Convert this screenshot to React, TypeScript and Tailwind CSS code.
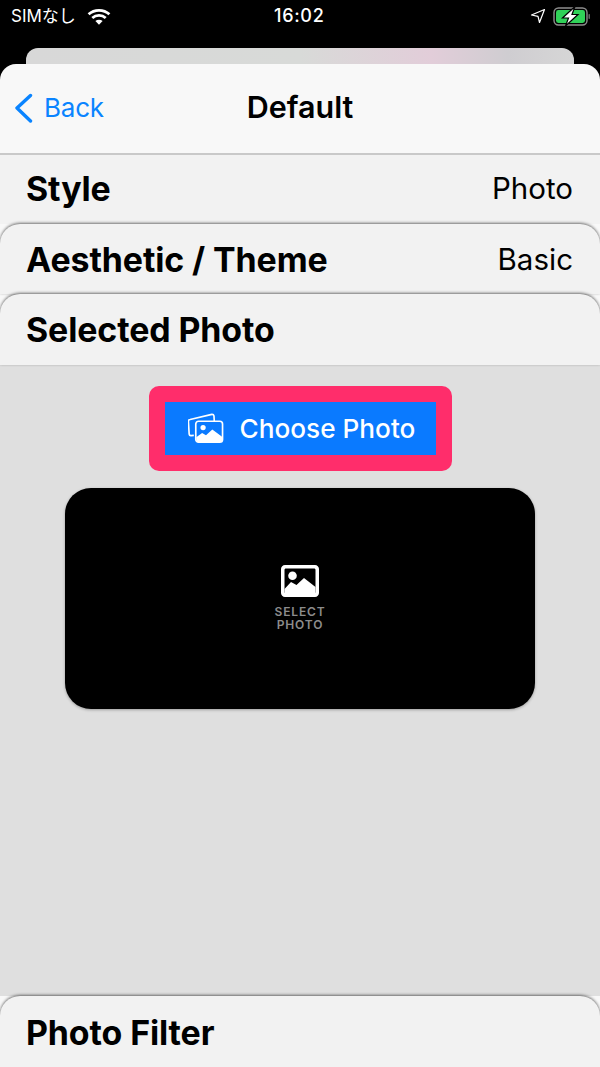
export default function App() {
  const font = "font-['Inter','Noto_Sans_CJK_JP',sans-serif]";

  return (
    <div className={`flex h-[1067px] w-[600px] flex-col overflow-hidden bg-black ${font}`}>
      {/* status bar */}
      <div className="relative flex h-[48px] shrink-0 items-start justify-between pl-[11px] pr-[9px] pt-[6px] text-white">
        <div className="flex h-[20px] items-center">
          <span className="text-[17px] leading-[20px]">SIMなし</span>
          <svg className="ml-[11px] h-[17px] w-[24px]" viewBox="0 0 24 17" fill="none" stroke="white" strokeWidth="2.8">
            <path d="M1.6 6.3 C7.4 1 16.6 1 22.4 6.3" />
            <path d="M5.3 10 C9 6.6 15 6.6 18.7 10" />
            <path d="M12 16.8 L8.4 12.9 C10.4 11.2 13.6 11.2 15.6 12.9 Z" fill="white" stroke="none" />
          </svg>
        </div>
        <span className="absolute left-[274px] top-[6px] text-[18px] leading-[20px] font-medium tracking-[0.7px]">16:02</span>
        <div className="flex h-[20px] items-center">
          <svg className="mr-[7px] h-[16px] w-[16px]" viewBox="0 0 16 16" fill="none" stroke="white" strokeWidth="1.2" strokeLinejoin="round">
            <path d="M14.5 1.5 L1.5 7 L8 8.3 L9.5 14.5 Z" />
          </svg>
          <svg className="h-[20px] w-[38px]" viewBox="0 0 38 20" fill="none">
            <rect x="1" y="2" width="33" height="17" rx="4.5" stroke="#8e8e8e" strokeWidth="1.4" />
            <rect x="3" y="4" width="29" height="13" rx="2.4" fill="#30d158" />
            <rect x="35.5" y="8" width="1.4" height="5" rx="0.7" fill="#6e6e6e" />
            <path d="M22 0.5 L9.5 12 L15.5 12 L12.5 20 L25 8.5 L19 8.5 Z" fill="white" stroke="black" strokeWidth="1.2" />
          </svg>
        </div>
      </div>

      {/* sheet behind */}
      <div className="mx-[26px] h-[16px] shrink-0 rounded-t-[12px] bg-[linear-gradient(90deg,#d8d8d8_0%,#d8dad8_50%,#e2cdd9_74%,#cfcdd1_88%,#d6d6d6_100%)]" />

      {/* main sheet */}
      <div className="flex flex-1 flex-col overflow-hidden rounded-t-[16px] bg-[#f8f8f8]">
        <div className="relative flex h-[91px] shrink-0 items-center justify-center border-b-2 border-[#c9c9c9]">
          <div className="absolute left-[14px] top-[29px] flex items-center text-[#0a84ff]">
            <svg className="h-[30px] w-[19px]" viewBox="0 0 19 30" fill="none" stroke="#0a84ff" strokeWidth="3.4" strokeLinecap="round" strokeLinejoin="round">
              <path d="M16.5 2.5 L3 15 L16.5 28" />
            </svg>
            <span className="ml-[11px] text-[26px] leading-[30px] tracking-[-0.2px]">Back</span>
          </div>
          <h1 className="-mt-[4px] text-[30.5px] leading-[34px] font-semibold text-black">Default</h1>
        </div>

        <Row title="Style" value="Photo" height="h-[69px]" offset="-mt-[1px]" first />
        <Row title="Aesthetic / Theme" value="Basic" height="h-[70px]" offset="mt-[1px]" />
        <Row title="Selected Photo" height="h-[71px]" offset="mt-[1px]" />

        <div className="flex flex-1 flex-col items-center bg-[#dfdfdf] pt-[21px]">
          <div className="rounded-[10px] bg-[#ff2d6b] p-[16px]">
            <button className="flex h-[53px] w-[271px] items-center bg-[#0a7aff] pl-[23px] text-white">
              <svg className="h-[31px] w-[36px]" viewBox="0 0 37 31" fill="none" stroke="white" strokeWidth="1.7" strokeLinejoin="round">
                <path d="M6 22.5 L3.2 22.8 C2 22.9 1.3 22.2 1.2 21.2 L0.4 8.4 C0.3 7.2 1 6.4 2.2 6.3 L24.5 1 C25.8 0.9 26.5 1.6 26.7 2.6 L27 8" />
                <rect x="8" y="8" width="27.5" height="21.5" rx="2.8" />
                <circle cx="15.5" cy="14.5" r="2.7" fill="white" stroke="none" />
                <path d="M8.5 27 L8.5 24.5 L14.5 20 L18.5 22.5 L25 16.5 L35 24 L35 27 C35 28.5 34 29.5 33 29.5 L11 29.5 C9.5 29.5 8.5 28.5 8.5 27 Z" fill="white" stroke="none" />
              </svg>
              <span className="ml-[16px] text-[26.2px] leading-[30px] font-medium">Choose Photo</span>
            </button>
          </div>

          <div className="mt-[17px] flex h-[221px] w-[470px] flex-col items-center rounded-[26px] bg-black pt-[77px] shadow-[0_1px_3px_rgba(0,0,0,0.3)]">
            <svg className="h-[32px] w-[38px]" viewBox="0 0 38 32">
              <path fillRule="evenodd" fill="white" d="M4 0 H34 C36.2 0 38 1.8 38 4 V28 C38 30.2 36.2 32 34 32 H4 C1.8 32 0 30.2 0 28 V4 C0 1.8 1.8 0 4 0 Z M5 3.5 C4 3.5 3.5 4 3.5 5 V27 C3.5 27.6 3.8 28 4.5 28 H33.5 C34.2 28 34.5 27.6 34.5 27 V5 C34.5 4 34 3.5 33 3.5 Z" />
              <circle cx="11.5" cy="10.7" r="4.3" fill="white" />
              <path fill="white" d="M3.5 24 L10 17 L15.5 20 L23 13 L34.5 22 L34.5 28 L3.5 28 Z" />
            </svg>
            <div className="mt-[8px] text-center text-[12px] leading-[13px] font-semibold tracking-[0.85px] text-[#8c8c8c]">
              SELECT<br />PHOTO
            </div>
          </div>
        </div>

        <Row title="Photo Filter" height="h-[71px]" offset="mt-[3px]" />
      </div>
    </div>
  );
}

function Row({ title, value, height, offset, first }: { title: string; value?: string; height: string; offset: string; first?: boolean }) {
  return (
    <div
      className={`relative flex shrink-0 items-center justify-between bg-[#f2f2f2] pl-[26px] pr-[27px] ${height} ${
        first ? '' : 'rounded-t-[20px] shadow-[0_-1px_3px_rgba(0,0,0,0.55)]'
      }`}
    >
      <span className={`text-[33.9px] leading-[38px] font-bold tracking-[-0.1px] text-black ${offset}`}>{title}</span>
      {value && <span className={`-translate-y-[1px] text-[29.5px] leading-[34px] text-black ${offset}`}>{value}</span>}
    </div>
  );
}
